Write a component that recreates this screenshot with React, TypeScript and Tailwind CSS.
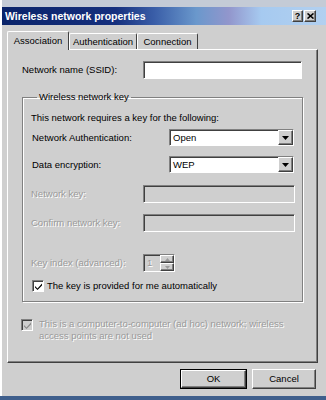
import React from 'react'

const raised =
  'border border-t-white border-l-white border-r-[#404040] border-b-[#404040] shadow-[inset_-1px_-1px_0_#808080]'
const sunken =
  'border border-t-[#808080] border-l-[#808080] border-r-white border-b-white shadow-[inset_1px_1px_0_#404040]'
const disabledText = 'text-[#9a9a9a] [text-shadow:1px_1px_0_#ffffff]'

function CheckMark({ color }: { color: string }) {
  return (
    <svg width="9" height="9" viewBox="0 0 9 9">
      <path d="M1 4 L3.5 6.5 L8 1.5 L8 3.5 L3.5 8 L1 5.5 Z" fill={color} />
    </svg>
  )
}

function Checkbox({ disabled }: { disabled?: boolean }) {
  return (
    <div
      className={`flex h-[12px] w-[12px] shrink-0 items-center justify-center ${sunken} ${
        disabled ? 'bg-[#cfcfcf]' : 'bg-white'
      }`}
    >
      <CheckMark color={disabled ? '#8a8a8a' : '#000000'} />
    </div>
  )
}

function Select({ value }: { value: string }) {
  return (
    <div className={`flex h-[17px] w-[125px] items-stretch bg-white ${sunken}`}>
      <span className="flex-1 pl-[3px] leading-[15px]">{value}</span>
      <div className={`flex w-[15px] items-center justify-center bg-[#cfcfcf] ${raised}`}>
        <svg width="7" height="4" viewBox="0 0 7 4">
          <path d="M0 0 H7 L3.5 4 Z" fill="#000" />
        </svg>
      </div>
    </div>
  )
}

function Field({ enabled, width }: { enabled?: boolean; width: number }) {
  return (
    <div
      className={`h-[18px] ${sunken} ${enabled ? 'bg-white' : 'bg-[#cfcfcf]'}`}
      style={{ width }}
    />
  )
}

function Tab({ label, active, width }: { label: string; active?: boolean; width: number }) {
  return (
    <div
      className={`flex items-center justify-center border-l border-t border-r border-l-white border-t-white border-r-[#404040] rounded-t-[2px] bg-[#cfcfcf] ${
        active ? 'relative z-10 -mb-[1px] h-[19px]' : 'h-[16px]'
      }`}
      style={{ width }}
    >
      {label}
    </div>
  )
}

export default function App() {
  return (
    <div className="h-[400px] w-[326px] overflow-hidden bg-[#3f5f8c] font-['Liberation_Sans',Arial,sans-serif] text-[9.5px] leading-[12px] text-black">
      <div className="flex h-[396px] flex-col border-l-2 border-l-white bg-[#cfcfcf]">
        {/* window frame top */}
        <div className="h-[7px] bg-[#c4cbd6]" />

        {/* title bar */}
        <div className="flex h-[18px] items-center bg-[linear-gradient(90deg,#0a246a_0%,#16307e_35%,#3a5ea8_47%,#6a98cc_60%,#9296cc_70%,#a6caf0_80%,#b2d0f0_100%)] pl-[3px] pr-[10px]">
          <span className="flex-1 text-[10.5px] font-bold text-white">Wireless network properties</span>
          <div className={`flex h-[12px] w-[11px] items-center justify-center bg-[#cfcfcf] text-[9px] font-bold leading-none ${raised}`}>
            ?
          </div>
          <div className={`ml-[1px] flex h-[12px] w-[12px] items-center justify-center bg-[#cfcfcf] ${raised}`}>
            <svg width="7" height="6" viewBox="0 0 7 6">
              <path d="M0.5 0.5 L6.5 5.5 M6.5 0.5 L0.5 5.5" stroke="#000" strokeWidth="1.6" />
            </svg>
          </div>
        </div>

        {/* tabs */}
        <div className="mt-[6px] flex items-end pl-[5px]">
          <Tab label="Association" active width={62} />
          <Tab label="Authentication" width={68} />
          <Tab label="Connection" width={61} />
        </div>

        {/* tab panel */}
        <div className="ml-[5px] flex h-[314px] w-[311px] flex-col border border-t-white border-l-white border-r-[#404040] border-b-[#404040] shadow-[inset_-1px_-1px_0_#808080]">
          <div className="ml-[14px] mt-[11px] flex h-[18px] items-center">
            <span className="w-[121px]">Network name (SSID):</span>
            <Field enabled width={159} />
          </div>

          <fieldset className="ml-[14px] mt-[12px] w-[281px] border border-[#808080] pb-[9px] pl-[8px] shadow-[inset_1px_1px_0_#ffffff,1px_1px_0_#ffffff]">
            <legend className="ml-[6px] px-[2px]">Wireless network key</legend>

            <div className="mt-[8px] flex h-[14px] items-center">
              This network requires a key for the following:
            </div>

            <div className="ml-[1px] mt-[4px] flex h-[17px] items-center">
              <span className="w-[137px]">Network Authentication:</span>
              <Select value="Open" />
            </div>

            <div className="ml-[1px] mt-[10px] flex h-[17px] items-center">
              <span className="w-[137px]">Data encryption:</span>
              <Select value="WEP" />
            </div>

            <div className="mt-[12px] flex h-[18px] items-center">
              <span className={`w-[112px] ${disabledText}`}>Network key:</span>
              <Field width={152} />
            </div>

            <div className="mt-[11px] flex h-[18px] items-center">
              <span className={`w-[112px] ${disabledText}`}>Confirm network key:</span>
              <Field width={152} />
            </div>

            <div className="mt-[22px] flex h-[18px] items-center">
              <span className={`w-[112px] ${disabledText}`}>Key index (advanced):</span>
              <div className={`flex h-[18px] w-[32px] items-stretch bg-[#cfcfcf] ${sunken}`}>
                <span className={`flex-1 pl-[3px] leading-[16px] ${disabledText}`}>1</span>
                <div className="flex w-[14px] flex-col">
                  {[0, 1].map((i) => (
                    <div key={i} className={`flex flex-1 items-center justify-center bg-[#cfcfcf] ${raised}`}>
                      <svg width="5" height="3" viewBox="0 0 5 3">
                        <path d={i === 0 ? 'M0 3 H5 L2.5 0 Z' : 'M0 0 H5 L2.5 3 Z'} fill="#9a9a9a" />
                      </svg>
                    </div>
                  ))}
                </div>
              </div>
            </div>

            <div className="ml-[1px] mt-[8px] flex h-[12px] items-center gap-[3px]">
              <Checkbox />
              <span>The key is provided for me automatically</span>
            </div>
          </fieldset>

          <div className="ml-[13px] mt-[16px] flex items-start gap-[6px]">
            <div className="mt-[1px]">
              <Checkbox disabled />
            </div>
            <span className={disabledText}>
              This is a computer-to-computer (ad hoc) network; wireless
              <br />
              access points are not used
            </span>
          </div>
        </div>

        {/* dialog buttons */}
        <div className="mt-[6px] flex gap-[5px] pl-[178px]">
          <div className="flex h-[20px] w-[67px] items-center justify-center border border-black">
            <div className={`flex h-full w-full items-center justify-center ${raised}`}>OK</div>
          </div>
          <div className={`flex h-[20px] w-[64px] items-center justify-center ${raised}`}>Cancel</div>
        </div>
      </div>
    </div>
  )
}
